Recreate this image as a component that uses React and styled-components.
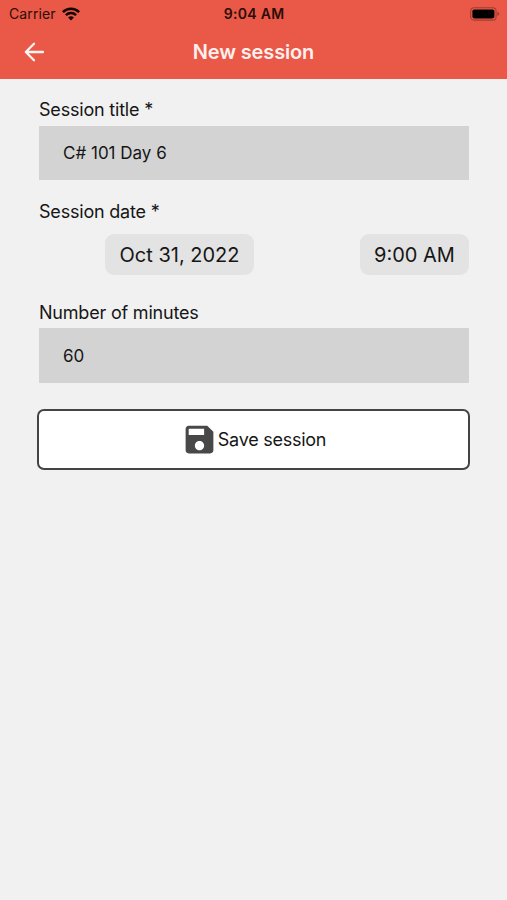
import React from "react";
import styled, { createGlobalStyle } from "styled-components";

const GlobalStyle = createGlobalStyle`
  * { box-sizing: border-box; }
  body {
    margin: 0;
    background: #f1f1f1;
    color: #161616;
    font-family: Inter, "Liberation Sans", sans-serif;
  }
`;

const Screen = styled.div`
  width: 507px;
  height: 900px;
  background: #f1f1f1;
  overflow: hidden;
`;

const Header = styled.header`
  height: 79px;
  background: #ea5847;
`;

const StatusBar = styled.div`
  height: 27px;
  display: grid;
  grid-template-columns: 1fr auto 1fr;
  align-items: center;
  padding: 0 7px 0 8px;
  color: #2a0d09;
`;

const Carrier = styled.div`
  display: flex;
  align-items: center;
  gap: 6px;
  padding-left: 1px;
  font-size: 14px;
  line-height: 27px;
  letter-spacing: 0.1px;
`;

const Clock = styled.div`
  font-size: 14px;
  line-height: 27px;
  font-weight: 600;
  letter-spacing: 0.3px;
`;

const Battery = styled.svg`
  justify-self: end;
`;

const NavBar = styled.div`
  height: 50px;
  display: grid;
  grid-template-columns: 68px 1fr 68px;
  align-items: center;
`;

const BackButton = styled.button`
  height: 50px;
  padding: 0 0 0 24px;
  border: 0;
  background: none;
  display: flex;
  align-items: center;
`;

const Title = styled.h1`
  margin: 0;
  text-align: center;
  color: #fff0ed;
  font-size: 20px;
  line-height: 50px;
  font-weight: 600;
  letter-spacing: -0.14px;
`;

const Form = styled.form`
  padding: 17px 38px 0 39px;
`;

const Label = styled.label`
  display: block;
  height: ${(p) => p.$height || "30px"};
  font-size: 18px;
  line-height: 28px;
  letter-spacing: -0.2px;
`;

const Field = styled.div`
  height: ${(p) => p.$height};
  padding-left: 24px;
  background: #d3d3d3;
  font-size: 17px;
  line-height: ${(p) => p.$line || "55px"};
`;

const PickerRow = styled.div`
  display: flex;
  justify-content: space-between;
  padding: 6px 0 0 66px;
  height: 71px;
`;

const Picker = styled.button`
  width: ${(p) => p.$width};
  height: 41px;
  padding: 1px 0 0;
  border: 0;
  border-radius: 9px;
  background: #e3e3e3;
  color: #161616;
  font: 400 20px/40px Inter, "Liberation Sans", sans-serif;
`;

const Group = styled.div`
  margin-bottom: ${(p) => p.$gap || "0"};
`;

const SaveButton = styled.button`
  width: 433px;
  height: 61px;
  margin-left: -2px;
  padding: 0;
  display: flex;
  align-items: center;
  justify-content: center;
  border: 2px solid #444;
  border-radius: 7px;
  background: #fff;
  color: #161616;
  font: 400 18px/28px Inter, "Liberation Sans", sans-serif;
  letter-spacing: -0.25px;
`;

const SaveIcon = styled.svg`
  flex: none;
`;

export default function App() {
  return (
    <Screen>
      <GlobalStyle />
      <Header>
        <StatusBar>
          <Carrier>
            Carrier
            <svg width="18" height="14" viewBox="0 0 18 14" fill="none" stroke="#140403" strokeWidth="2.5">
              <path d="M0.9 5.1C5.5 0.6 12.5 0.6 17.1 5.1" />
              <path d="M3.9 8.2C6.8 5.4 11.2 5.4 14.1 8.2" />
              <path d="M6.1 10.4C7.8 8.9 10.2 8.9 11.9 10.4L9 13.4Z" fill="#140403" stroke="none" />
            </svg>
          </Carrier>
          <Clock>9:04 AM</Clock>
          <Battery width="30" height="14" viewBox="0 0 30 14">
            <rect x="0.7" y="0.7" width="25.4" height="12.4" rx="3.4" fill="none" stroke="#a13c31" strokeWidth="1.1" />
            <rect x="2.4" y="2.4" width="22" height="9" rx="1.8" fill="#000" />
            <path d="M27.4 4.8C29.9 5.6 29.9 8.2 27.4 9Z" fill="#a13c31" />
          </Battery>
        </StatusBar>
        <NavBar>
          <BackButton type="button" aria-label="Back">
            <svg width="21" height="20" viewBox="0 0 21 20" fill="none" stroke="#fff5f2" strokeWidth="2.3" strokeLinecap="round" strokeLinejoin="round">
              <path d="M19 10H2M10 1.8L1.8 10L10 18.2" />
            </svg>
          </BackButton>
          <Title>New session</Title>
        </NavBar>
      </Header>
      <Form>
        <Group $gap="18px">
          <Label>Session title *</Label>
          <Field $height="54px">C# 101 Day 6</Field>
        </Group>
        <Group>
          <Label>Session date *</Label>
          <PickerRow>
            <Picker type="button" $width="149px">Oct 31, 2022</Picker>
            <Picker type="button" $width="109px">9:00 AM</Picker>
          </PickerRow>
        </Group>
        <Group $gap="26px">
          <Label $height="29px">Number of minutes</Label>
          <Field $height="55px" $line="57px">60</Field>
        </Group>
        <SaveButton type="button">
          <SaveIcon width="37" height="37" viewBox="0 0 24 24" fill="#484848">
            <path d="M17 3H5c-1.11 0-2 .9-2 2v14c0 1.1.89 2 2 2h14c1.1 0 2-.9 2-2V7l-4-4zm-5 16c-1.66 0-3-1.34-3-3s1.34-3 3-3 3 1.34 3 3-1.34 3-3 3zm3-10H5V5h10v4z" />
          </SaveIcon>
          Save session
        </SaveButton>
      </Form>
    </Screen>
  );
}
